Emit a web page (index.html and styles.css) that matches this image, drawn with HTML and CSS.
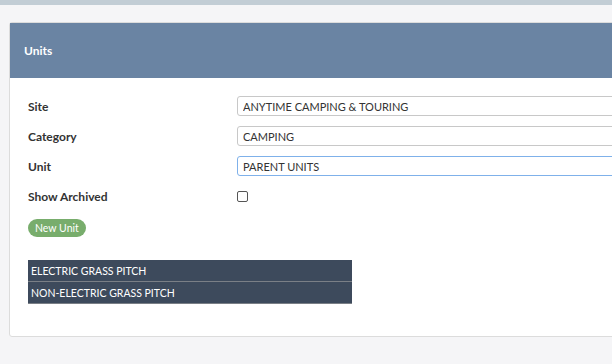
FILE: index.html
```html
<!DOCTYPE html>
<html lang="en">
<head>
    <meta charset="UTF-8">
    <meta name="viewport" content="width=device-width, initial-scale=1.0">
    <title>Units</title>
    <link rel="stylesheet" href="styles.css">
</head>
<body>
    <div class="topbar"></div>
    <div class="page">
        <div class="panel">
            <div class="panel-heading">Units</div>
            <div class="panel-body">
                <form id="unitForm">
                    <div class="form-row">
                        <label for="site">Site</label>
                        <input type="text" id="site" value="ANYTIME CAMPING &amp; TOURING">
                    </div>
                    <div class="form-row">
                        <label for="category">Category</label>
                        <input type="text" id="category" value="CAMPING">
                    </div>
                    <div class="form-row">
                        <label for="unit">Unit</label>
                        <input type="text" id="unit" class="focused" value="PARENT UNITS">
                    </div>
                    <div class="form-row">
                        <label for="archived">Show Archived</label>
                        <input type="checkbox" id="archived">
                    </div>
                    <button type="button" class="btn-new">New Unit</button>
                </form>

                <table class="unit-list">
                    <tr><td>ELECTRIC GRASS PITCH</td></tr>
                    <tr><td>NON-ELECTRIC GRASS PITCH</td></tr>
                </table>
            </div>
        </div>
    </div>
</body>
</html>
```

FILE: styles.css
```css
body {
    margin: 0;
    font-family: Lato, "Open Sans", sans-serif;
    font-size: 11px;
    color: #333;
    background-color: #f5f5f7;
    overflow: hidden;
}
.topbar {
    height: 5px;
    background-color: #c2cdd5;
}
.page {
    padding: 17px 0 0 9px;
}
.panel {
    width: 660px;
    background: white;
    border: 1px solid #dcdcdc;
    border-radius: 3px;
}
.panel-heading {
    height: 55px;
    line-height: 55px;
    padding-left: 14px;
    background-color: #6a84a3;
    color: white;
    font-size: 12px;
    font-weight: bold;
}
.panel-body {
    padding: 18px 18px 32px 18px;
}
.form-row {
    display: flex;
    align-items: center;
    height: 20px;
    margin-bottom: 10px;
}
.form-row label {
    width: 209px;
    font-size: 12px;
    font-weight: bold;
}
.form-row input[type="text"] {
    flex: 1;
    height: 20px;
    box-sizing: border-box;
    padding: 0 5px;
    border: 1px solid #c8c8c8;
    border-radius: 3px;
    font-family: inherit;
    font-size: 11px;
    color: #333;
    outline: none;
}
.form-row input.focused {
    border-color: #7fb1ea;
}
.form-row input[type="checkbox"] {
    appearance: none;
    width: 11px;
    height: 11px;
    margin: 0;
    border: 1px solid #555;
    border-radius: 2px;
    background: white;
}
.btn-new {
    margin-top: 3px;
    height: 18px;
    padding: 0 7px;
    background-color: #78ad6c;
    color: white;
    border: none;
    border-radius: 9px;
    font-family: inherit;
    font-size: 10.5px;
    cursor: pointer;
}
.unit-list {
    margin-top: 23px;
    width: 324px;
    border-collapse: collapse;
}
.unit-list td {
    height: 21px;
    padding: 0 3px;
    background-color: #3d4a5c;
    color: white;
    font-size: 10.5px;
    border-bottom: 1px solid #7a7f86;
}
```
